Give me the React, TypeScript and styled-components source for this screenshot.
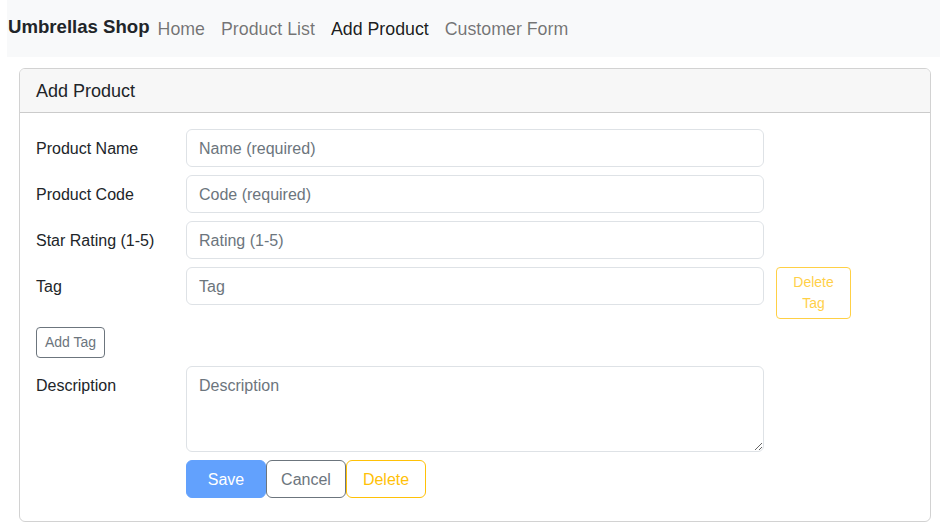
import styled, { createGlobalStyle } from "styled-components";

const GlobalStyle = createGlobalStyle`
  body {
    margin: 0;
    font-family: "Liberation Sans", Arial, sans-serif;
    color: #212529;
    background: #fff;
  }
`;

const navLinks = [
  { label: "Home", active: false },
  { label: "Product List", active: false },
  { label: "Add Product", active: true },
  { label: "Customer Form", active: false },
];

const textFields = [
  { label: "Product Name", placeholder: "Name (required)" },
  { label: "Product Code", placeholder: "Code (required)" },
  { label: "Star Rating (1-5)", placeholder: "Rating (1-5)" },
];

function App() {
  return (
    <Page>
      <GlobalStyle />
      <NavBar>
        <Brand>Umbrellas Shop</Brand>
        {navLinks.map((link) => (
          <NavLink key={link.label} $active={link.active}>
            {link.label}
          </NavLink>
        ))}
      </NavBar>

      <Card>
        <CardHeader>Add Product</CardHeader>
        <CardBody>
          {textFields.map((field) => (
            <FormRow key={field.label}>
              <Label>{field.label}</Label>
              <Input placeholder={field.placeholder} />
            </FormRow>
          ))}
          <FormRow>
            <Label>Tag</Label>
            <Input placeholder="Tag" />
            <SmallButton $variant="warning" $wide>
              Delete Tag
            </SmallButton>
          </FormRow>
          <div>
            <SmallButton $variant="secondary">Add Tag</SmallButton>
          </div>
          <FormRow>
            <Label>Description</Label>
            <TextArea placeholder="Description" />
          </FormRow>
          <ButtonRow>
            <Button $variant="primary">Save</Button>
            <Button $variant="secondary">Cancel</Button>
            <Button $variant="warning">Delete</Button>
          </ButtonRow>
        </CardBody>
      </Card>
    </Page>
  );
}

export default App;

type Variant = "primary" | "secondary" | "warning";

const variantColors: Record<Variant, { bg: string; border: string; color: string }> = {
  primary: { bg: "#62a1fd", border: "#62a1fd", color: "#fff" },
  secondary: { bg: "#fff", border: "#6c757d", color: "#6c757d" },
  warning: { bg: "#fff", border: "#ffc107", color: "#ffc107" },
};

const Page = styled.div`
  padding-left: 7px;
  width: 940px;
  box-sizing: border-box;
`;

const NavBar = styled.nav`
  height: 57px;
  background: #f8f9fa;
  display: flex;
  align-items: center;
  padding-left: 1px;
`;

const Brand = styled.span`
  font-size: 18.6px;
  font-weight: 700;
  color: #212529;
  margin-top: -4px;
`;

const NavLink = styled.a<{ $active: boolean }>`
  font-size: 17.8px;
  padding: 0 8px;
  margin-top: 2px;
  color: ${(p) => (p.$active ? "rgba(0, 0, 0, 0.9)" : "rgba(0, 0, 0, 0.55)")};
  cursor: pointer;
`;

const Card = styled.section`
  margin: 11px 9px 0 12px;
  border: 1px solid rgba(0, 0, 0, 0.175);
  border-radius: 6px;
  overflow: hidden;
`;

const CardHeader = styled.header`
  height: 44px;
  display: flex;
  align-items: center;
  padding: 2px 16px 0;
  box-sizing: border-box;
  font-size: 18px;
  background: #f7f7f7;
  border-bottom: 1px solid rgba(0, 0, 0, 0.175);
`;

const CardBody = styled.div`
  padding: 16px 16px 23px;
  display: flex;
  flex-direction: column;
  gap: 8px;
`;

const FormRow = styled.div`
  display: flex;
  align-items: flex-start;
`;

const Label = styled.label`
  width: 150px;
  flex-shrink: 0;
  font-size: 16px;
  line-height: 24px;
  padding-top: 8px;
`;

const fieldStyles = `
  width: 578px;
  box-sizing: border-box;
  border: 1px solid #dee2e6;
  border-radius: 6px;
  padding: 7px 12px 5px;
  font-family: "Liberation Sans", Arial, sans-serif;
  font-size: 16px;
  line-height: 24px;
  color: #212529;
  background: #fff;
  outline: none;
  &::placeholder {
    color: #6c757d;
  }
`;

const Input = styled.input`
  ${fieldStyles}
  height: 38px;
`;

const TextArea = styled.textarea`
  ${fieldStyles}
  height: 86px;
  resize: vertical;
  display: block;
`;

const SmallButton = styled.button<{ $variant: Variant; $wide?: boolean }>`
  width: ${(p) => (p.$wide ? "75px" : "auto")};
  margin-left: ${(p) => (p.$wide ? "12px" : "0")};
  font-family: "Liberation Sans", Arial, sans-serif;
  font-size: 14px;
  line-height: 21px;
  padding: 4px 8px;
  border-radius: 4px;
  background: #fff;
  border: 1px solid ${(p) => variantColors[p.$variant].border};
  color: ${(p) => variantColors[p.$variant].color};
  opacity: ${(p) => (p.$variant === "warning" ? 0.75 : 1)};
  cursor: pointer;
`;

const ButtonRow = styled.div`
  display: flex;
  padding-left: 150px;
`;

const Button = styled.button<{ $variant: Variant }>`
  width: 80px;
  height: 38px;
  padding-top: 2px;
  font-family: "Liberation Sans", Arial, sans-serif;
  font-size: 16px;
  border-radius: 6px;
  background: ${(p) => variantColors[p.$variant].bg};
  border: 1px solid ${(p) => variantColors[p.$variant].border};
  color: ${(p) => variantColors[p.$variant].color};
  cursor: pointer;
`;
